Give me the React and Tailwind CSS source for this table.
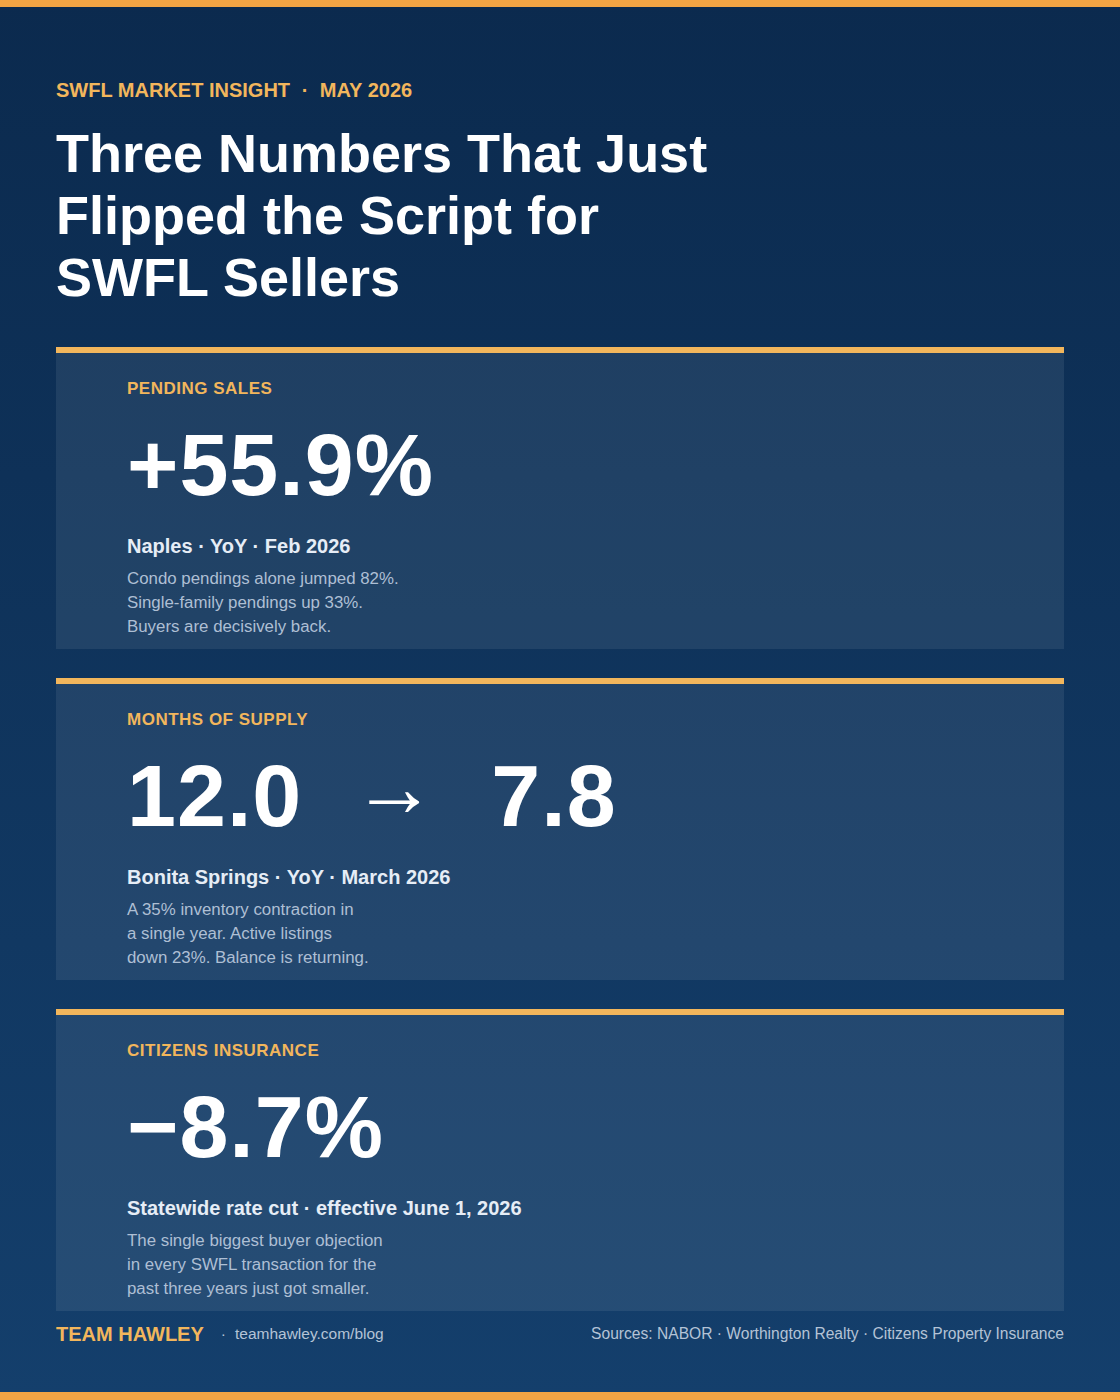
const stats = [
  {
    label: "PENDING SALES",
    value: "+55.9%",
    title: "Naples · YoY · Feb 2026",
    lines: ["Condo pendings alone jumped 82%.", "Single-family pendings up 33%.", "Buyers are decisively back."],
  },
  {
    label: "MONTHS OF SUPPLY",
    from: "12.0",
    to: "7.8",
    title: "Bonita Springs · YoY · March 2026",
    lines: ["A 35% inventory contraction in", "a single year. Active listings", "down 23%. Balance is returning."],
  },
  {
    label: "CITIZENS INSURANCE",
    value: "\u22128.7%",
    title: "Statewide rate cut · effective June 1, 2026",
    lines: ["The single biggest buyer objection", "in every SWFL transaction for the", "past three years just got smaller."],
  },
];

function StatCard({ stat }) {
  return (
    <div className="border-t-[6px] border-[#f2b65c] bg-white/[0.08] pl-[71px] pt-[26px] pb-[10px]">
      <div className="text-[17px] font-bold leading-[20px] tracking-[0.5px] text-[#f2b65c]">{stat.label}</div>

      {stat.from ? (
        <div className="mt-[22px] flex h-[88px] items-center text-[88px] font-bold leading-[88px] tracking-[1px] text-white">
          <span>{stat.from}</span>
          <span className="mb-[18px] ml-[50px] mr-[55px] text-[84px] font-normal leading-none tracking-normal">→</span>
          <span>{stat.to}</span>
        </div>
      ) : (
        <div className="mt-[22px] text-[88px] font-bold leading-[88px] tracking-[1px] text-white">{stat.value}</div>
      )}

      <div className="mt-[25px] text-[20px] font-bold leading-[24px] text-[#e6edf6]">{stat.title}</div>

      <p className="mt-[9px] text-[16.85px] leading-[24px] text-[#aebfd4]">
        {stat.lines.map((line) => (
          <span key={line} className="block">
            {line}
          </span>
        ))}
      </p>
    </div>
  );
}

export default function App() {
  return (
    <div
      className="flex h-[1400px] w-[1120px] flex-col bg-gradient-to-b from-[#0b2a4e] to-[#143f6c]"
      style={{ fontFamily: '"Liberation Sans", Arial, sans-serif' }}
    >
      <div className="h-[7px] bg-[#f2a444]" />

      <div className="flex flex-1 flex-col px-[56px] pt-[71px]">
        {/* Header */}
        <div className="text-[20px] font-bold leading-[24px] text-[#f2b65c]">
          SWFL MARKET INSIGHT <span className="mx-[6px]">·</span> MAY 2026
        </div>

        <h1 className="mt-[20px] text-[54px] font-bold leading-[62px] text-white">
          Three Numbers That Just
          <br />
          Flipped the Script for
          <br />
          SWFL Sellers
        </h1>

        {/* Cards */}
        <div className="mt-[39px] flex flex-col gap-[29px]">
          {stats.map((stat) => (
            <StatCard key={stat.label} stat={stat} />
          ))}
        </div>

        {/* Footer */}
        <div className="mt-[11px] flex items-center justify-between leading-[24px]">
          <div className="flex items-center text-[#b4c3d6]">
            <span className="text-[20px] font-bold text-[#f2b65c]">TEAM HAWLEY</span>
            <span className="ml-[17px] text-[15.5px]">·</span>
            <span className="ml-[9px] text-[15.5px]">teamhawley.com/blog</span>
          </div>
          <span className="text-[15.6px] text-[#b4c3d6]">
            Sources: NABOR · Worthington Realty · Citizens Property Insurance
          </span>
        </div>
      </div>

      <div className="h-[8px] bg-[#f2a444]" />
    </div>
  );
}
